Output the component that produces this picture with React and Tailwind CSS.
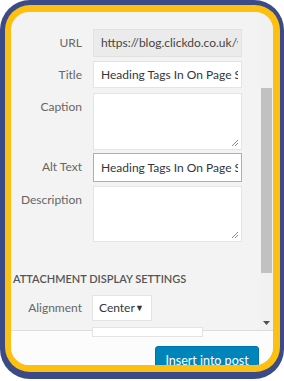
import React from "react";

const font = { fontFamily: 'Lato, "Liberation Sans", sans-serif' };

function Grip() {
  return (
    <svg className="absolute bottom-[2px] right-[2px]" width="8" height="8" viewBox="0 0 8 8">
      <path d="M7 1 L1 7 M7 4 L4 7" stroke="#8a8a8a" strokeWidth="1" />
    </svg>
  );
}

function Row({ label, children, className = "" }) {
  return (
    <div className={"flex items-start " + className}>
      <div className="w-[71px] shrink-0 text-right text-[12px] leading-[16px] text-[#666] pt-[6px]">{label}</div>
      <div className="ml-[11px]">{children}</div>
    </div>
  );
}

export default function App() {
  return (
    <div className="w-[284px] h-[381px] bg-white" style={font}>
      <div className="w-[284px] h-[379px] rounded-[30px] bg-[#3b4b88] pl-[5px] pt-[5px] pr-[4px] pb-[7px]">
        <div className="w-full h-full rounded-[25px] bg-[#fdbf10] pl-[6px] pt-[7px] pr-[7px] pb-[7px]">
          <div className="w-full h-full rounded-[18px] overflow-hidden bg-[#f3f3f3] flex flex-col">
            <div className="flex h-[318px]">
              <div className="w-[249px] pt-[17px] relative">
                <Row label="URL">
                  <div className="w-[149px] h-[28px] border border-[#e2e2e2] bg-[#ebebeb] pl-[7px] pr-[3px] text-[12px] leading-[26px] text-[#444]">
                    <div className="overflow-hidden whitespace-nowrap">https://blog.clickdo.co.uk/wp</div>
                  </div>
                </Row>
                <Row label="Title" className="mt-[4px]">
                  <div className="w-[149px] h-[27px] border border-[#e4e4e4] bg-white pl-[7px] pr-[3px] text-[12px] leading-[25px] text-[#32373c]">
                    <div className="overflow-hidden whitespace-nowrap">Heading Tags In On Page SEO</div>
                  </div>
                </Row>
                <Row label="Caption" className="mt-[5px]">
                  <div className="relative w-[149px] h-[57px] border border-[#e4e4e4] bg-white">
                    <Grip />
                  </div>
                </Row>
                <Row label="Alt Text" className="mt-[3px]">
                  <div className="w-[149px] h-[29px] border border-[#8ab8e6] bg-white pl-[7px] pr-[3px] text-[12px] leading-[27px] text-[#32373c]">
                    <div className="overflow-hidden whitespace-nowrap">Heading Tags In On Page SEO</div>
                  </div>
                </Row>
                <Row label="Description" className="mt-[4px]">
                  <div className="relative w-[149px] h-[56px] border border-[#e4e4e4] bg-white">
                    <Grip />
                  </div>
                </Row>
                <div className="mt-[29px] pl-[2px] text-[11px] leading-[16px] font-semibold text-[#555] whitespace-nowrap">
                  ATTACHMENT DISPLAY SETTINGS
                </div>
                <div className="flex items-start mt-[8px]">
                  <div className="w-[71px] shrink-0 text-right text-[12px] leading-[16px] text-[#666] pt-[5px]">Alignment</div>
                  <div className="ml-[10px] w-[60px] h-[26px] border border-[#e4e4e4] bg-white flex items-center justify-between pl-[6px] pr-[7px] text-[12px] text-[#32373c]">
                    <span>Center</span>
                    <span className="text-[9px] text-[#333]">▼</span>
                  </div>
                </div>
                <div className="ml-[81px] mt-[6px] w-[111px] h-[10px] border border-[#e4e4e4] bg-white"></div>
              </div>
              <div className="w-[13px] bg-[#f1f1f1] flex flex-col">
                <div className="h-[76px]"></div>
                <div className="mx-[1px] h-[185px] bg-[#c1c1c1]"></div>
                <div className="flex-1 flex items-end justify-center pb-[5px]">
                  <svg width="7" height="4" viewBox="0 0 7 4"><path d="M0 0 H7 L3.5 4 Z" fill="#505050" /></svg>
                </div>
              </div>
            </div>
            <div className="flex-1 bg-[#fcfcfc] border-t border-[#dddddd] flex justify-end items-start pt-[15px] pr-[14px]">
              <div className="w-[104px] h-[30px] rounded-[3px] bg-[#0085ba] border border-[#0073aa] text-white text-[12.5px] leading-[28px] text-center whitespace-nowrap">
                Insert into post
              </div>
            </div>
          </div>
        </div>
      </div>
    </div>
  );
}
